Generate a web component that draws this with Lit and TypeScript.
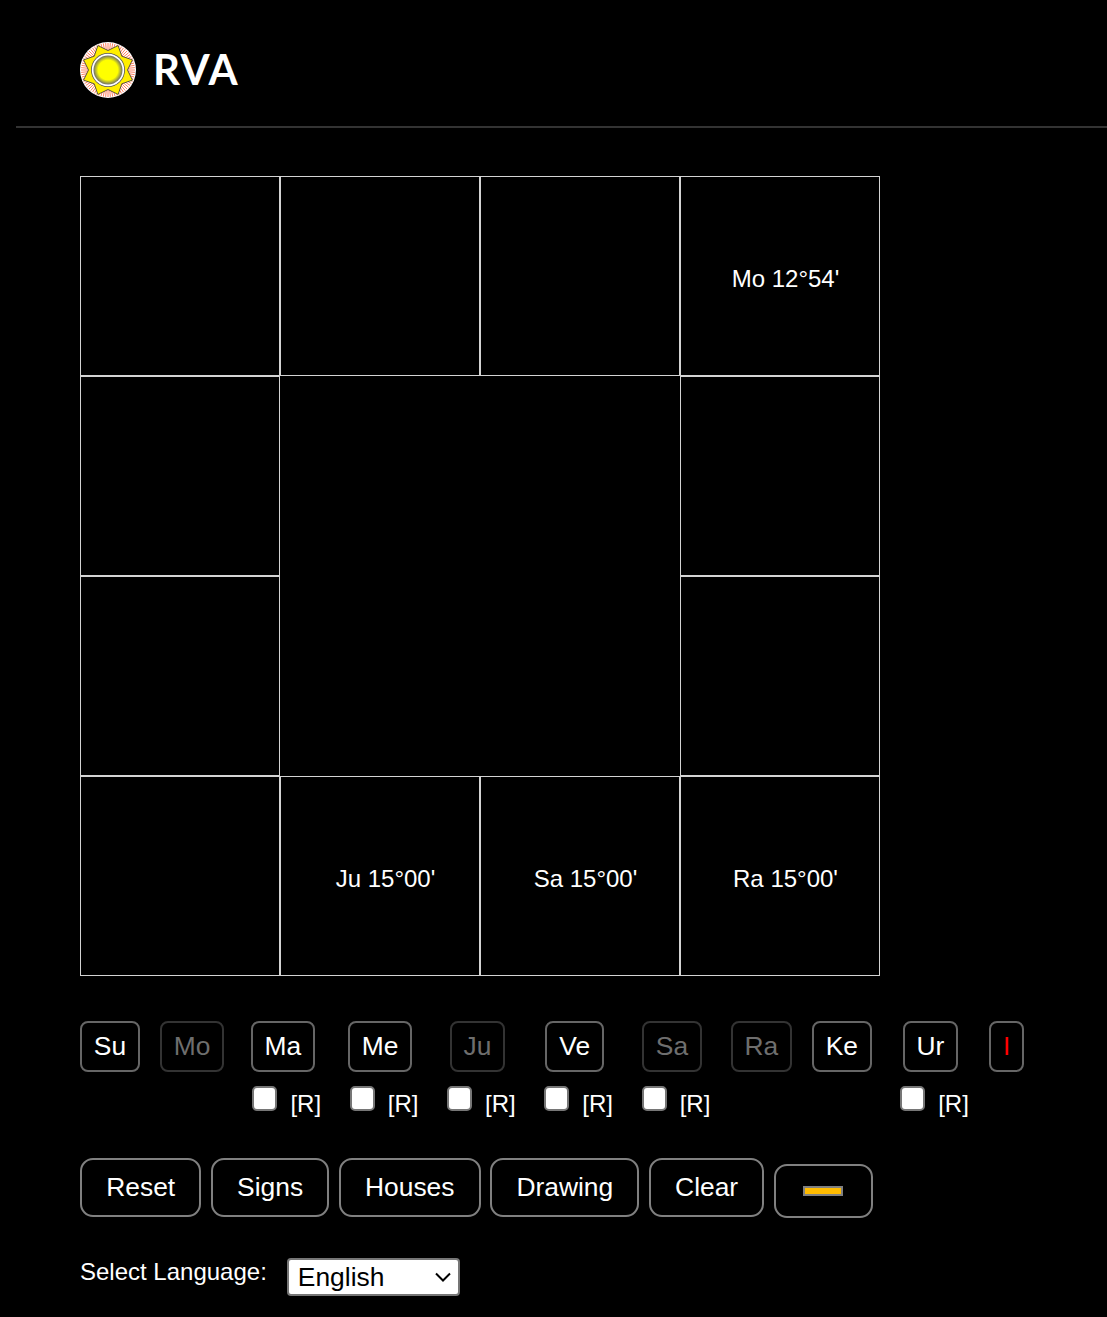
import { LitElement, html, css, svg } from "lit";
import { customElement } from "lit/decorators.js";

const star = (() => {
  const pts: string[] = [];
  for (let i = 0; i < 16; i++) {
    const a = ((i * 22.5 - 67.5) * Math.PI) / 180;
    const r = i % 2 === 0 ? 26.5 : 19.5;
    pts.push(`${(28 + r * Math.cos(a)).toFixed(2)},${(28 + r * Math.sin(a)).toFixed(2)}`);
  }
  return pts.join(" ");
})();

const rays = Array.from({ length: 72 }, (_, i) => {
  const a = (i * 5 * Math.PI) / 180;
  return svg`<line x1=${28 + 16 * Math.cos(a)} y1=${28 + 16 * Math.sin(a)} x2=${28 + 27 * Math.cos(a)} y2=${28 + 27 * Math.sin(a)} stroke="#ff8060" stroke-width="1"></line>`;
});

type Planet = { n: string; off?: boolean; r?: boolean; red?: boolean };
const planets: Planet[] = [
  { n: "Su" },
  { n: "Mo", off: true },
  { n: "Ma", r: true },
  { n: "Me", r: true },
  { n: "Ju", off: true, r: true },
  { n: "Ve", r: true },
  { n: "Sa", off: true, r: true },
  { n: "Ra", off: true },
  { n: "Ke" },
  { n: "Ur", r: true },
  { n: "I", red: true },
];

const cells: Record<number, string> = {
  3: "Mo 12°54'",
  13: "Ju 15°00'",
  14: "Sa 15°00'",
  15: "Ra 15°00'",
};

@customElement("app-root")
export class AppRoot extends LitElement {
  static styles = css`
    :host {
      display: block;
      height: 1317px;
      overflow: hidden;
      background: #000;
      color: #fff;
      font-family: "Liberation Sans", Arial, sans-serif;
      font-size: 24px;
    }
    header {
      margin-left: 16px;
      padding: 42px 0 28px 64px;
      border-bottom: 2px solid #333;
      display: flex;
      align-items: center;
      gap: 18px;
    }
    .logo { width: 56px; height: 56px; display: block; }
    .brand {
      font-family: Lato, sans-serif;
      font-weight: 700;
      font-size: 42px;
      line-height: 54px;
      letter-spacing: 1.4px;
      margin: -2px 0 0 -1px;
    }
    main { padding: 48px 0 0 80px; }
    .chart {
      display: grid;
      grid-template-columns: repeat(4, 200px);
      grid-template-rows: repeat(4, 200px);
      width: 800px;
    }
    .cell {
      box-sizing: border-box;
      border: 1px solid #d3d3d3;
      display: flex;
      align-items: center;
      justify-content: center;
      padding: 5px 0 0 11px;
    }
    .center { grid-column: 2 / span 2; grid-row: 2 / span 2; }
    .planets {
      display: flex;
      gap: 13px;
      align-items: flex-start;
      margin-top: 45px;
    }
    .planet { display: flex; flex-direction: column; align-items: center; }
    button {
      font: inherit;
      background: #000;
      color: #fff;
      cursor: pointer;
    }
    .p-btn {
      font-size: 26.4px;
      border: 2px solid #666;
      border-radius: 8px;
      padding: 10px 11.8px;
      margin-right: 7px;
      line-height: 27px;
    }
    .p-btn.off { color: #6e6e6e; border-color: #333; }
    .p-btn.red { color: #f00; }
    .retro {
      width: 84.3px;
      display: flex;
      justify-content: center;
      margin-top: 14px;
      padding-left: 1px;
      box-sizing: border-box;
    }
    .retro input {
      appearance: none;
      width: 25px;
      height: 25px;
      margin: 0 13px 0 0;
      background: #fff;
      border: 2px solid #767676;
      border-radius: 5px;
      box-sizing: border-box;
    }
    .retro span { line-height: 27px; margin-top: 4px; }
    .actions {
      display: flex;
      gap: 9.4px;
      align-items: flex-start;
      margin-top: 41px;
    }
    .a-btn {
      border: 2px solid #808080;
      border-radius: 13px;
      font-size: 26.4px;
      line-height: 30px;
      padding: 11.5px 24.25px 13.5px;
      height: 59px;
      box-sizing: border-box;
    }
    .swatch-btn {
      width: 99px;
      height: 54px;
      margin-top: 6px;
      padding: 0;
      display: flex;
      align-items: center;
      justify-content: center;
      border: 2px solid #808080;
      border-radius: 13px;
    }
    .swatch {
      display: block;
      box-sizing: border-box;
      width: 40px;
      height: 10px;
      background: #ffbb00;
      border: 2px solid #808080;
    }
    .lang {
      display: flex;
      align-items: flex-start;
      gap: 20px;
      margin-top: 40px;
    }
    .lang label { line-height: 27px; }
    .select-wrap { position: relative; display: block; width: 173px; height: 38px; }
    select {
      appearance: none;
      display: block;
      width: 173px;
      height: 38px;
      font-family: inherit;
      font-size: 26.4px;
      color: #000;
      background: #fff;
      border: 2px solid #767676;
      border-radius: 4px;
      padding: 0 0 0 9px;
      box-sizing: border-box;
    }
    .chev {
      position: absolute;
      left: 148px;
      top: 14px;
      width: 16px;
      height: 10px;
      pointer-events: none;
    }
  `;

  render() {
    return html`
      <header>
        <svg class="logo" viewBox="0 0 56 56">
          <defs>
            <radialGradient id="sun" cx="50%" cy="50%" r="50%">
              <stop offset="0%" stop-color="#ffff00"></stop>
              <stop offset="68%" stop-color="#ffff00"></stop>
              <stop offset="100%" stop-color="#6e6e66"></stop>
            </radialGradient>
          </defs>
          <circle cx="28" cy="28" r="28" fill="#fff"></circle>
          ${rays}
          <polygon points=${star} fill="#ffee00" stroke="#333" stroke-width="0.8"></polygon>
          <circle cx="28" cy="28" r="17" fill="#555"></circle>
          <circle cx="28" cy="28" r="16.2" fill="#fff"></circle>
          <circle cx="28" cy="28" r="14.5" fill="url(#sun)"></circle>
        </svg>
        <div class="brand">RVA</div>
      </header>
      <main>
        <div class="chart">
          ${[0, 1, 2, 3, 4].map((i) => html`<div class="cell">${cells[i] ?? ""}</div>`)}
          <div class="center"></div>
          ${[7, 8, 11, 12, 13, 14, 15].map((i) => html`<div class="cell">${cells[i] ?? ""}</div>`)}
        </div>
        <div class="planets">
          ${planets.map(
            (p) => html`<div class="planet">
              <button class="p-btn ${p.off ? "off" : ""} ${p.red ? "red" : ""}">${p.n}</button>
              ${p.r
                ? html`<div class="retro"><input type="checkbox" /><span>[R]</span></div>`
                : ""}
            </div>`
          )}
        </div>
        <div class="actions">
          ${["Reset", "Signs", "Houses", "Drawing", "Clear"].map(
            (t) => html`<button class="a-btn">${t}</button>`
          )}
          <button class="swatch-btn" aria-label="Colour"><span class="swatch"></span></button>
        </div>
        <div class="lang">
          <label>Select Language:</label>
          <span class="select-wrap">
            <select><option>English</option></select>
            <svg class="chev" viewBox="0 0 16 10">
              <path d="M1 1.5 L8 8.5 L15 1.5" fill="none" stroke="#000" stroke-width="2"></path>
            </svg>
          </span>
        </div>
      </main>
    `;
  }
}
